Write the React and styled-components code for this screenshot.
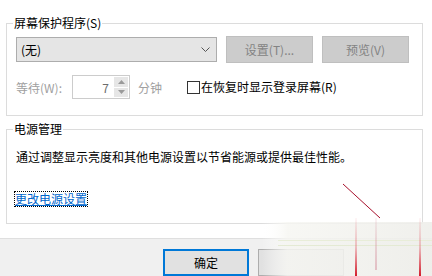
import React from "react";
import styled, { createGlobalStyle } from "styled-components";

const GlobalStyle = createGlobalStyle`
  html, body {
    margin: 0;
    padding: 0;
    background: #ffffff;
  }
  body {
    font-family: "Noto Sans CJK SC", "Noto Sans", sans-serif;
    font-size: 12px;
    color: #000000;
  }
`;

const Window = styled.div`
  position: relative;
  width: 432px;
  height: 276px;
  overflow: hidden;
  display: flex;
  flex-direction: column;
`;

const Body = styled.div`
  height: 240px;
  background: #ffffff;
  padding-top: 15px;
  box-sizing: border-box;
  display: flex;
  flex-direction: column;
  gap: 5px;
`;

const Group = styled.fieldset`
  margin: 0 9px 0 6px;
  border: 1px solid #dcdcdc;
  padding: ${(p) => p.$pad};
  min-width: 0;
  height: ${(p) => p.$h}px;
  box-sizing: border-box;
`;

const Legend = styled.legend`
  margin-left: -3px;
  padding: 0 1px;
  font-size: 12px;
  line-height: 16px;
  color: #000;
`;

const Row = styled.div`
  display: flex;
  align-items: center;
  gap: ${(p) => p.$gap || 0}px;
  height: ${(p) => p.$h}px;
  margin-top: ${(p) => p.$mt || 0}px;
`;

const Select = styled.div`
  width: 201px;
  height: 25px;
  box-sizing: border-box;
  background: #e5e5e5;
  border: 1px solid #adadad;
  display: flex;
  align-items: center;
  justify-content: space-between;
  padding: 0 6px 0 4px;
  font-size: 12px;
`;

const DisabledButton = styled.div`
  width: 87px;
  height: 27px;
  box-sizing: border-box;
  background: #cccccc;
  border: 1px solid #bfbfbf;
  color: #838383;
  display: flex;
  align-items: center;
  justify-content: center;
  font-size: 12px;
`;

const GrayLabel = styled.span`
  color: #a0a0a0;
  font-size: 12px;
  width: ${(p) => p.$w}px;
`;

const Spin = styled.div`
  width: 58px;
  height: 24px;
  box-sizing: border-box;
  border: 1px solid #cccccc;
  display: flex;
  align-items: stretch;
  margin-right: 8px;
`;

const SpinValue = styled.div`
  flex: 1;
  display: flex;
  align-items: center;
  justify-content: flex-end;
  padding-right: 4px;
  color: #6d6d6d;
  font-size: 12px;
`;

const SpinArrows = styled.div`
  width: 16px;
  display: flex;
  flex-direction: column;
  gap: 1px;
  padding: 1px;
  box-sizing: border-box;
`;

const SpinArrow = styled.div`
  flex: 1;
  background: #e6e6e6;
  display: flex;
  align-items: center;
  justify-content: center;
`;

const Check = styled.span`
  width: 13px;
  height: 13px;
  box-sizing: border-box;
  border: 1px solid #333333;
  background: #fff;
  margin-left: 25px;
  margin-right: 1px;
`;

const Text = styled.div`
  font-size: 12px;
  line-height: 16px;
  white-space: nowrap;
`;

const Link = styled.a`
  display: inline-block;
  color: #0066cc;
  text-decoration: underline;
  font-size: 12px;
  line-height: 14px;
  outline: 1px dotted #000;
  outline-offset: 0;
  margin-top: ${(p) => p.$mt}px;
  margin-left: -1px;
  cursor: pointer;
`;

const Footer = styled.div`
  flex: 1;
  background: #f0f0f0;
  border-top: 1px solid #dfdfdf;
  display: flex;
  gap: 9px;
  padding: 10px 0 0 163px;
`;

const FooterButton = styled.div`
  width: 86px;
  height: 27px;
  box-sizing: border-box;
  background: #e1e1e1;
  border: ${(p) => (p.$primary ? "2px solid #0078d7" : "1px solid #adadad")};
  display: flex;
  align-items: center;
  justify-content: center;
  font-size: 12px;
`;

const Overlay = styled.svg`
  position: absolute;
  left: 0;
  top: 0;
  pointer-events: none;
`;

export default function App() {
  return (
    <Window>
      <GlobalStyle />
      <Body>
        <Group $pad="4px 0 0 9px" $h={101}>
          <Legend>屏幕保护程序(S)</Legend>
          <Row $gap={9} $h={28}>
            <Select>
              <span>(无)</span>
              <svg width="9" height="5" viewBox="0 0 9 5">
                <polyline points="0.5,0.5 4.5,4.5 8.5,0.5" fill="none" stroke="#555" strokeWidth="1" />
              </svg>
            </Select>
            <DisabledButton>设置(T)...</DisabledButton>
            <DisabledButton>预览(V)</DisabledButton>
          </Row>
          <Row $h={24} $mt={12}>
            <GrayLabel $w={56}>等待(W):</GrayLabel>
            <Spin>
              <SpinValue>7</SpinValue>
              <SpinArrows>
                <SpinArrow>
                  <svg width="7" height="4" viewBox="0 0 7 4">
                    <polygon points="0,4 3.5,0 7,4" fill="#9a9a9a" />
                  </svg>
                </SpinArrow>
                <SpinArrow>
                  <svg width="7" height="4" viewBox="0 0 7 4">
                    <polygon points="0,0 3.5,4 7,0" fill="#9a9a9a" />
                  </svg>
                </SpinArrow>
              </SpinArrows>
            </Spin>
            <GrayLabel $w={24}>分钟</GrayLabel>
            <Check />
            <Text>在恢复时显示登录屏幕(R)</Text>
          </Row>
        </Group>
        <Group $pad="12px 0 0 9px" $h={103}>
          <Legend>电源管理</Legend>
          <Text>通过调整显示亮度和其他电源设置以节省能源或提供最佳性能。</Text>
          <Link $mt={27}>更改电源设置</Link>
        </Group>
      </Body>
      <Footer>
        <FooterButton $primary>确定</FooterButton>
        <FooterButton />
      </Footer>
      <Overlay width="432" height="276" viewBox="0 0 432 276">
        <defs>
          <linearGradient id="haze" x1="0" y1="0" x2="1" y2="0">
            <stop offset="0" stopColor="#ffffff" stopOpacity="0" />
            <stop offset="0.15" stopColor="#f6f6f2" stopOpacity="0.85" />
            <stop offset="1" stopColor="#eeeeea" stopOpacity="0.9" />
          </linearGradient>
          <linearGradient id="streak" x1="0" y1="0" x2="0" y2="1">
            <stop offset="0" stopColor="#e04050" stopOpacity="0.05" />
            <stop offset="0.5" stopColor="#e04050" stopOpacity="0.3" />
            <stop offset="1" stopColor="#d01020" stopOpacity="0.95" />
          </linearGradient>
          <linearGradient id="faint" x1="0" y1="0" x2="0" y2="1">
            <stop offset="0" stopColor="#d08090" stopOpacity="0.1" />
            <stop offset="1" stopColor="#d08090" stopOpacity="0.45" />
          </linearGradient>
        </defs>
        <rect x="262" y="222" width="170" height="54" fill="url(#haze)" />
        <rect x="278" y="240" width="154" height="1" fill="#e8edd8" />
        <rect x="278" y="245" width="154" height="1" fill="#e4ead4" />
        <rect x="355" y="218" width="2" height="58" fill="url(#streak)" />
        <rect x="375" y="218" width="2" height="52" fill="url(#faint)" />
        <rect x="419" y="218" width="2" height="58" fill="url(#streak)" />
        <line x1="343" y1="184" x2="380" y2="218" stroke="#a8102c" strokeWidth="1" />
      </Overlay>
    </Window>
  );
}
